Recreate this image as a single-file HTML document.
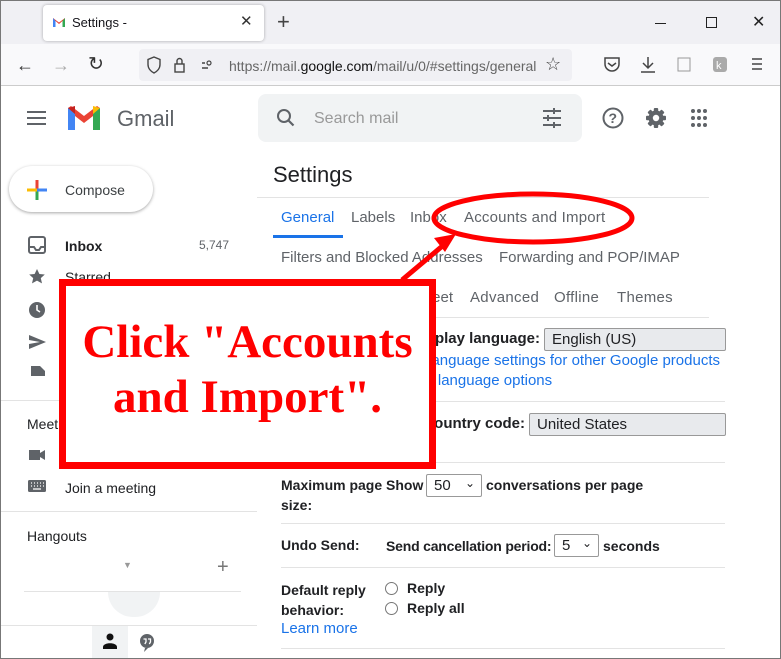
<!DOCTYPE html>
<html><head><style>
body{margin:0;width:781px;height:659px;overflow:hidden;font-family:"Liberation Sans",Arial,sans-serif;background:#fff;position:relative}
.a{position:absolute}
.frame{position:absolute;left:0;top:0;width:779px;height:657px;border:1px solid #777;}
.t{position:absolute;white-space:nowrap}
.g{color:#5f6368}
.b{font-weight:bold;color:#202124;font-size:14px}
.lnk{color:#1a73e8;font-size:15px}
.sel{position:absolute;background:#e8eaed;border:1px solid #999;border-radius:2px;font-size:15px;color:#202124;padding:2px 7px;box-sizing:border-box;height:23px}
.hr{position:absolute;height:1px;background:#e3e3e3}
.r{position:absolute;white-space:nowrap;text-align:right}
</style></head><body>
<div class="a" style="left:0;top:0;width:781px;height:44px;background:#f0f0f4"></div>
<div class="a" style="left:43px;top:5px;width:221px;height:36px;background:#fff;border-radius:4px;box-shadow:0 0 3px rgba(0,0,0,.3)"></div>
<svg class="a" style="left:52px;top:16px" width="14" height="12" viewBox="0 0 14 12"><path d="M1 2v9h2.5V5L7 8l3.5-3v6H13V2L7 6.5z" fill="#ea4335"/><path d="M1 2v9h2.5V5z" fill="#4285f4"/><path d="M10.5 5v6H13V2z" fill="#34a853"/></svg>
<div class="t" style="left:72px;top:15px;font-size:13px;color:#15141a">Settings -</div>
<div class="t" style="left:240px;top:12px;font-size:15px;color:#333">✕</div>
<div class="t" style="left:277px;top:9px;font-size:22px;color:#444;font-weight:300">+</div>
<div class="a" style="left:655px;top:23px;width:11px;height:1px;background:#222"></div>
<div class="a" style="left:706px;top:17px;width:9px;height:9px;border:1px solid #222"></div>
<div class="t" style="left:752px;top:12px;font-size:16px;color:#222">✕</div>
<div class="a" style="left:0;top:44px;width:781px;height:41px;background:#f9f9fb;border-bottom:1px solid #ccc"></div>
<div class="t" style="left:16px;top:55px;font-size:18px;color:#333">←</div>
<div class="t" style="left:52px;top:55px;font-size:18px;color:#aaa">→</div>
<div class="t" style="left:88px;top:53px;font-size:19px;color:#333">↻</div>
<div class="a" style="left:139px;top:49px;width:433px;height:32px;background:#f0f0f4;border-radius:4px"></div>
<svg class="a" style="left:146px;top:56px" width="70" height="18"><path d="M8 1l6 2.5v5c0 4-3 7-6 8.5-3-1.5-6-4.5-6-8.5v-5z" fill="none" stroke="#444" stroke-width="1.4"/><rect x="29" y="8" width="9" height="8" fill="none" stroke="#444" stroke-width="1.4"/><path d="M31 8V5a2.5 2.5 0 015 0v3" fill="none" stroke="#444" stroke-width="1.4"/><path d="M56 7h3M56 12h6" stroke="#444" stroke-width="1.4"/><circle cx="63" cy="7" r="2" fill="none" stroke="#444" stroke-width="1.2"/></svg>
<div class="t" style="left:229px;top:58px;font-size:14px;color:#666">https://mail.<span style="color:#111">google.com</span>/mail/u/0/#settings/general</div>
<div class="t" style="left:545px;top:54px;font-size:18px;color:#444">☆</div>
<svg class="a" style="left:602px;top:55px" width="170" height="20"><path d="M3 3h14v6a7 7 0 01-14 0z" fill="none" stroke="#444" stroke-width="1.5"/><path d="M6 8l4 3 4-3" fill="none" stroke="#444" stroke-width="1.5"/><path d="M46 2v11M41 8l5 5 5-5M39 17h14" fill="none" stroke="#444" stroke-width="1.5"/><rect x="76" y="3" width="12" height="13" fill="none" stroke="#999"/><rect x="111" y="2" width="14" height="15" rx="3" fill="#aaa"/><text x="114" y="14" font-size="11" fill="#fff">k</text><path d="M150 4h10M150 9h10M150 14h10" stroke="#444" stroke-width="1.5"/></svg>
<!-- gmail header -->
<svg class="a" style="left:27px;top:110px" width="20" height="16"><path d="M0 2h19M0 8h19M0 14h19" stroke="#5f6368" stroke-width="2"/></svg>
<svg class="a" style="left:66px;top:104px" width="36" height="28" viewBox="0 0 36 28"><path d="M2 4v22h7V12l9 7 9-7v14h7V4l-3-2-13 10L5 2z" fill="#ea4335"/><path d="M2 4v22h7V10z" fill="#4285f4"/><path d="M27 10v16h7V4z" fill="#34a853"/><path d="M34 4l-7 6V2z" fill="#fbbc04"/><path d="M2 4l7 6V2z" fill="#c5221f"/></svg>
<div class="t" style="left:117px;top:106px;font-size:22px;color:#5f6368">Gmail</div>
<div class="a" style="left:258px;top:94px;width:324px;height:48px;background:#f1f3f4;border-radius:8px"></div>
<svg class="a" style="left:276px;top:108px" width="20" height="20"><circle cx="8" cy="8" r="6" fill="none" stroke="#5f6368" stroke-width="2"/><path d="M12.5 12.5l5 5" stroke="#5f6368" stroke-width="2.2"/></svg>
<div class="t" style="left:314px;top:110px;font-size:16px;color:#999">Search mail</div>
<svg class="a" style="left:542px;top:108px" width="20" height="20"><path d="M1 3h18M1 10h18M1 17h18" stroke="#5f6368" stroke-width="2"/><path d="M12 0v6M6 7v6M12 14v6" stroke="#5f6368" stroke-width="2"/></svg>
<svg class="a" style="left:601px;top:106px" width="120" height="24"><circle cx="12" cy="12" r="9.5" fill="none" stroke="#5f6368" stroke-width="2"/><text x="7.5" y="17" font-size="14" font-weight="bold" fill="#5f6368" font-family="Liberation Sans">?</text>
<g transform="translate(55 12)" fill="#5f6368"><rect x="-2.2" y="-10" width="4.4" height="20" rx="1"/><rect x="-2.2" y="-10" width="4.4" height="20" rx="1" transform="rotate(45)"/><rect x="-2.2" y="-10" width="4.4" height="20" rx="1" transform="rotate(90)"/><rect x="-2.2" y="-10" width="4.4" height="20" rx="1" transform="rotate(135)"/><circle r="7.5"/><circle r="3.2" fill="#fff"/></g>
<g fill="#5f6368"><circle cx="92" cy="5" r="2"/><circle cx="98" cy="5" r="2"/><circle cx="104" cy="5" r="2"/><circle cx="92" cy="12" r="2"/><circle cx="98" cy="12" r="2"/><circle cx="104" cy="12" r="2"/><circle cx="92" cy="19" r="2"/><circle cx="98" cy="19" r="2"/><circle cx="104" cy="19" r="2"/></g></svg>
<!-- sidebar -->
<div class="a" style="left:9px;top:166px;width:144px;height:46px;border-radius:24px;box-shadow:0 1px 3px rgba(0,0,0,.35);background:#fff"></div>
<svg class="a" style="left:25px;top:178px" width="24" height="24"><path d="M12 2v10" stroke="#ea4335" stroke-width="3"/><path d="M12 12v10" stroke="#34a853" stroke-width="3"/><path d="M2 12h10" stroke="#fbbc04" stroke-width="3"/><path d="M12 12h10" stroke="#4285f4" stroke-width="3"/></svg>
<div class="t" style="left:65px;top:182px;font-size:14px;color:#3c4043">Compose</div>
<svg class="a" style="left:28px;top:236px" width="20" height="140"><rect x="1" y="1" width="16" height="16" rx="2" fill="none" stroke="#5f6368" stroke-width="2"/><path d="M1 11h5l2 3h3l2-3h5" fill="none" stroke="#5f6368" stroke-width="2"/><path d="M9 33l2.4 5 5.4.5-4 3.6 1.2 5.3L9 44.6 4 47.4l1.2-5.3-4-3.6 5.4-.5z" fill="#5f6368"/><circle cx="9" cy="74" r="8" fill="#5f6368"/><path d="M9 69v5l3 2" stroke="#fff" stroke-width="1.6" fill="none"/><path d="M1 99l17 7-17 7v-5l11-2-11-2z" fill="#5f6368"/><path d="M3 130h9l5 5v13H3z" fill="#5f6368"/></svg>
<div class="t" style="left:65px;top:238px;font-size:14px;font-weight:bold;color:#202124">Inbox</div>
<div class="t" style="left:199px;top:238px;font-size:12px;color:#5f6368">5,747</div>
<div class="t" style="left:65px;top:269px;font-size:14px;color:#202124">Starred</div>
<div class="hr" style="left:0;top:400px;width:257px"></div>
<div class="t" style="left:27px;top:416px;font-size:14px;color:#202124">Meet</div>
<svg class="a" style="left:28px;top:448px" width="20" height="50"><path d="M1 2h11v10H1zM12 5l5-3v10l-5-3z" fill="#5f6368"/><rect x="0" y="32" width="18" height="12" rx="1.5" fill="#5f6368"/><path d="M3 35h1M6 35h1M9 35h1M12 35h1M15 35h1M3 38h1M6 38h1M9 38h1M12 38h1M15 38h1M5 41h8" stroke="#fff" stroke-width="1.2"/></svg>
<div class="t" style="left:65px;top:480px;font-size:14px;color:#202124">Join a meeting</div>
<div class="hr" style="left:0;top:511px;width:257px"></div>
<div class="t" style="left:27px;top:528px;font-size:14px;color:#202124">Hangouts</div>
<div class="t" style="left:123px;top:560px;font-size:9px;color:#999">▼</div>
<div class="t" style="left:217px;top:556px;font-size:20px;color:#777">+</div>
<div class="hr" style="left:24px;top:591px;width:217px"></div>
<div class="a" style="left:108px;top:592px;width:52px;height:25px;background:#f1f3f4;border-radius:0 0 26px 26px"></div>
<div class="hr" style="left:0;top:625px;width:257px"></div>
<div class="a" style="left:92px;top:626px;width:36px;height:32px;background:#f1f3f4"></div>
<svg class="a" style="left:101px;top:632px" width="60" height="20"><circle cx="9" cy="5" r="3.5" fill="#111"/><path d="M2 15c0-5 14-5 14 0v2H2z" fill="#111"/><circle cx="46" cy="9" r="7" fill="#5f6368"/><path d="M44 16l-1 4 4-4z" fill="#5f6368"/><path d="M42.5 7h2.5v3l-1.2 2M47 7h2.5v3l-1.2 2" stroke="#fff" stroke-width="1.3" fill="none"/></svg>
<!-- settings -->
<div class="t" style="left:273px;top:162px;font-size:22px;color:#202124">Settings</div>
<div class="hr" style="left:257px;top:197px;width:452px"></div>
<div class="t" style="left:281px;top:209px;font-size:15px;color:#1a73e8">General</div>
<div class="a" style="left:273px;top:235px;width:70px;height:3px;background:#1a73e8"></div>
<div class="t g" style="left:351px;top:209px;font-size:15px">Labels</div>
<div class="t g" style="left:410px;top:209px;font-size:15px">Inbox</div>
<div class="t g" style="left:464px;top:209px;font-size:15px;letter-spacing:0.2px">Accounts and Import</div>
<div class="t g" style="left:281px;top:249px;font-size:15px">Filters and Blocked Addresses</div>
<div class="t g" style="left:499px;top:249px;font-size:15px">Forwarding and POP/IMAP</div>
<div class="r g" style="right:328px;top:289px;font-size:15px">Chat and Meet</div>
<div class="t g" style="left:470px;top:289px;font-size:15px;letter-spacing:0.3px">Advanced</div>
<div class="t g" style="left:554px;top:289px;font-size:15px;letter-spacing:0.3px">Offline</div>
<div class="t g" style="left:617px;top:289px;font-size:15px;letter-spacing:0.3px">Themes</div>
<div class="hr" style="left:257px;top:317px;width:452px"></div>
<div class="r b" style="right:241px;top:330px;font-size:15px">Display language:</div>
<div class="sel" style="left:544px;top:328px;width:182px">English (US)</div>
<div class="r lnk" style="right:61px;top:352px">Change language settings for other Google products</div>
<div class="t lnk" style="left:377px;top:372px">Show all language options</div>
<div class="hr" style="left:281px;top:401px;width:444px"></div>
<div class="r b" style="right:256px;top:415px;font-size:15px">Phone number country code:</div>
<div class="sel" style="left:529px;top:413px;width:197px">United States</div>
<div class="hr" style="left:281px;top:462px;width:444px"></div>
<div class="t b" style="left:281px;top:475px;line-height:20px">Maximum page<br>size:</div>
<div class="t b" style="left:386px;top:477px">Show</div>
<div class="sel" style="left:426px;top:474px;width:56px;background:#fff">50<span style="position:absolute;right:6px;top:1px;font-size:12px">⌄</span></div>
<div class="t b" style="left:486px;top:477px">conversations per page</div>
<div class="hr" style="left:281px;top:523px;width:444px"></div>
<div class="t b" style="left:281px;top:537px">Undo Send:</div>
<div class="t b" style="left:386px;top:538px;letter-spacing:-0.2px">Send cancellation period:</div>
<div class="sel" style="left:554px;top:534px;width:45px;background:#fff">5<span style="position:absolute;right:6px;top:1px;font-size:12px">⌄</span></div>
<div class="t b" style="left:603px;top:538px">seconds</div>
<div class="hr" style="left:281px;top:567px;width:444px"></div>
<div class="t b" style="left:281px;top:580px;line-height:20px">Default reply<br>behavior:</div>
<div class="t lnk" style="left:281px;top:620px">Learn more</div>
<div class="a" style="left:385px;top:582px;width:11px;height:11px;border:1.5px solid #777;border-radius:50%"></div>
<div class="a" style="left:385px;top:602px;width:11px;height:11px;border:1.5px solid #777;border-radius:50%"></div>
<div class="t b" style="left:407px;top:580px">Reply</div>
<div class="t b" style="left:407px;top:600px">Reply all</div>
<div class="hr" style="left:281px;top:648px;width:444px"></div>
<!-- annotation -->
<div class="a" style="left:59px;top:279px;width:363px;height:176px;border:7px solid #f00;background:#fff"></div>
<div class="t" style="left:59px;top:315px;width:377px;text-align:center;font-family:'Liberation Serif',serif;font-weight:bold;font-size:47px;line-height:55px;color:#f00">Click "Accounts<br>and Import".</div>
<svg class="a" style="left:0;top:0" width="781" height="659"><ellipse cx="533" cy="218" rx="99" ry="24" fill="none" stroke="#f00" stroke-width="5"/><path d="M402 280L446 243" stroke="#f00" stroke-width="5"/><path d="M456 234l-22 4 11 14z" fill="#f00"/></svg>
<div class="frame"></div>
</body></html>
